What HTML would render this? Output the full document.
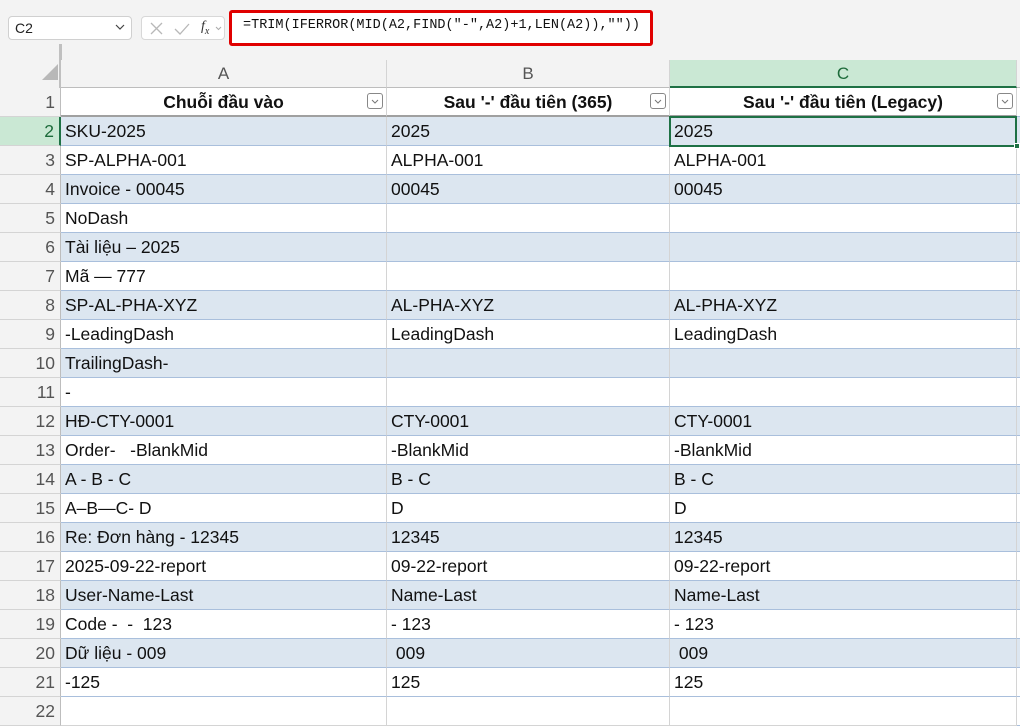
<!DOCTYPE html>
<html><head><meta charset="utf-8"><style>
*{box-sizing:border-box;margin:0;padding:0}
body{width:1020px;height:728px;overflow:hidden;background:#f3f3f3;font-family:"Liberation Sans","DejaVu Sans",sans-serif;position:relative}
.a{position:absolute}
.nb{left:8px;top:16px;width:124px;height:24px;background:#fff;border:1px solid #d0d0d0;border-radius:4px;font-size:14px;padding:3px 0 0 6px;color:#222}
.fx{left:141px;top:16px;width:84px;height:24px;background:#fff;border:1px solid #d8d8d8;border-radius:4px}
.red{left:229px;top:10px;width:424px;height:36px;border:3px solid #e00000;background:#fff;border-radius:3px}
.ftext{left:243px;top:18px;font-family:"Liberation Mono",monospace;font-size:13.5px;color:#111}
.grid{left:0;top:60px;width:1020px;height:668px;background:#fff}
.ch{position:absolute;top:60px;height:28px;background:#f3f3f3;color:#555;font-size:17px;text-align:center;line-height:28px;border-right:1px solid #d4d4d4;border-bottom:1px solid #bdbdbd}
.rh{position:absolute;left:0;width:61px;height:29px;background:#f3f3f3;color:#555;font-size:17.5px;text-align:right;padding-right:5px;line-height:29px;border-right:1px solid #bdbdbd;border-bottom:1px solid #d4d4d4}
.c{position:absolute;height:29px;font-size:17.5px;line-height:29px;padding-left:4px;color:#111;white-space:pre;border-right:1px solid #d4d4d4;border-bottom:1px solid #a9bfdc;overflow:hidden}
.band{background:#dce6f0}
.h{font-weight:bold;text-align:center;padding-left:0;border-bottom:2px solid #a0a0a0}
.dd{position:absolute;top:5px;right:3px;width:16px;height:16px;border:1px solid #888;border-radius:3px;background:#fff}
</style></head><body>
<div class="a nb">C2<svg style="position:absolute;right:6px;top:7px" width="10" height="6"><path d="M1 1l4 4 4-4" stroke="#444" stroke-width="1.2" fill="none"/></svg></div>
<div class="a fx">
<svg width="84" height="24" style="position:absolute;left:0;top:0"><path d="M9 6l11 11M20 6L9 17" stroke="#b8b8b8" stroke-width="1.3" fill="none"/><path d="M33 12l5 5 9-10" stroke="#b8b8b8" stroke-width="1.3" fill="none"/><path d="M74 10l2.5 2.5 2.5-2.5" stroke="#aaa" stroke-width="1" fill="none"/></svg>
<span style="position:absolute;left:59px;top:2px;font-family:'Liberation Serif',serif;font-style:italic;font-size:14px;color:#333">f<sub style="font-size:10px">x</sub></span></div>
<div class="a red"></div>
<div class="a ftext">=TRIM(IFERROR(MID(A2,FIND("-",A2)+1,LEN(A2)),""))</div>
<div class="a" style="left:59px;top:44px;width:3px;height:44px;background:#c0c0c0"></div>
<svg class="a" style="left:40px;top:62px" width="20" height="20"><path d="M18 2V18H2Z" fill="#b8b8b8"/></svg>
<div class="a grid" style="top:88px;height:640px"></div>
<div class="ch" style="left:61px;width:326px">A</div>
<div class="ch" style="left:387px;width:283px">B</div>
<div class="ch" style="left:670px;width:347px;background:#cae8d4;color:#1d6b3a;border-bottom:2px solid #1e7145">C</div>
<div class="ch" style="left:1017px;width:10px"></div>
<div id="rows"></div>
<script>
const d=[["Chuỗi đầu vào","Sau '-' đầu tiên (365)","Sau '-' đầu tiên (Legacy)"],
["SKU-2025","2025","2025"],["SP-ALPHA-001","ALPHA-001","ALPHA-001"],["Invoice - 00045","00045","00045"],["NoDash","",""],["Tài liệu – 2025","",""],["Mã — 777","",""],["SP-AL-PHA-XYZ","AL-PHA-XYZ","AL-PHA-XYZ"],["-LeadingDash","LeadingDash","LeadingDash"],["TrailingDash-","",""],["-","",""],["HĐ-CTY-0001","CTY-0001","CTY-0001"],["Order-   -BlankMid","-BlankMid","-BlankMid"],["A - B - C","B - C","B - C"],["A–B—C- D","D","D"],["Re: Đơn hàng - 12345","12345","12345"],["2025-09-22-report","09-22-report","09-22-report"],["User-Name-Last","Name-Last","Name-Last"],["Code -  -  123","- 123","- 123"],["Dữ liệu - 009"," 009"," 009"],["-125","125","125"],["","",""]];
const X=[61,387,670,1017],W=[326,283,347];let h="";
const dd='<span class="dd"><svg style="position:absolute;left:3px;top:5px" width="8" height="5"><path d="M1 1l3 3 3-3" stroke="#777" stroke-width="1" fill="none"/></svg></span>';
d.forEach((r,i)=>{const y=88+i*29,n=i+1;
h+=`<div class="rh" style="top:${y}px;${n==2?'background:#cae8d4;color:#1d6b3a;border-right:2px solid #1e7145':''}">${n}</div>`;
const band=(n%2==0&&n<22)?' band':'';
r.forEach((t,j)=>{h+=`<div class="c${band}${n==1?' h':''}" style="left:${X[j]}px;top:${y}px;width:${W[j]}px;${n==22?'border-bottom-color:#d4d4d4':''}">${t}${n==1?dd:''}</div>`});
h+=`<div class="c${band}" style="left:1017px;top:${y}px;width:10px"></div>`;});
h+=`<div class="a" style="left:669px;top:116px;width:348px;height:31px;border:2px solid #1e7145"></div><div class="a" style="left:1014px;top:143px;width:6px;height:6px;background:#1e7145;border:1px solid #fff"></div>`;
document.getElementById('rows').innerHTML=h;
</script>
</body></html>
